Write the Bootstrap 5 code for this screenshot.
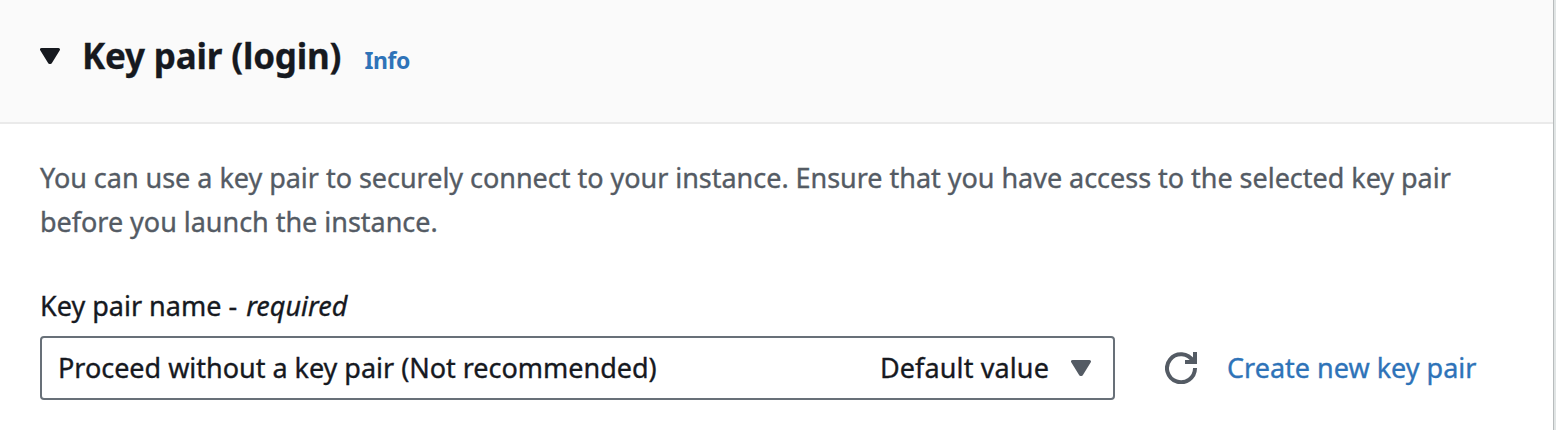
<!DOCTYPE html>
<html lang="en"><head><meta charset="utf-8"><title>Key pair</title>
<link rel="stylesheet" href="https://cdn.jsdelivr.net/npm/bootstrap@5.3.0/dist/css/bootstrap.min.css">
<style>
body{font-family:"Noto Sans","Open Sans",sans-serif;color:#16191f;height:430px;overflow:hidden;background:#e1e5e5}
.panel{width:1554px;height:430px;background:#fff;border-right:1px solid #b8bcbd}
.panel-head{height:124px;background:#fafafa;border-bottom:2px solid #eaeaea;padding:35px 0 0 40px}
.t{display:inline-block;white-space:nowrap}
.title{font-size:35px;line-height:42px;font-weight:700;width:260px;margin:0 22px;letter-spacing:-.18px;-webkit-text-stroke:.3px}
.info{font-size:23px;font-weight:700;color:#2e73b8;letter-spacing:-.4px;padding-left:.5px}
.desc{font-size:27px;line-height:44px;color:#545b64;padding:32px 0 0 40px;letter-spacing:-.03px;-webkit-text-stroke:.35px}
.lab{font-size:27px;line-height:36px;margin:44px 0 12px 40px;-webkit-text-stroke:.35px}
.lab i{margin-left:2px}
.pick{padding-left:40px;font-size:27px;-webkit-text-stroke:.35px}
.sel{width:1075px;height:64px;border:2px solid #687078;border-radius:4px;padding:0 22px 0 16px}
.sel .t{letter-spacing:-.02px}
.sel .dv{letter-spacing:.12px;margin-right:22px}
.refresh{margin:0 30px 0 50px}
.link{color:#2e73b8}
</style></head><body>
<main class="panel">
<header class="panel-head d-flex align-items-baseline"><svg width="20" height="21" viewBox="0 0 20 21"><path d="M1.500 1.500H18.500L10.500 14.500H9.500Z" fill="#16191f" stroke="#16191f" stroke-width="3" stroke-linejoin="round"/></svg>
<h2 class="title mb-0"><span class="t">Key pair (login)</span></h2><a class="info text-decoration-none"><span class="t">Info</span></a></header>
<div class="desc"><span class="t">You can use a key pair to securely connect to your instance. Ensure that you have access to the selected key pair</span><br><span class="t">before you launch the instance.</span></div>
<div class="lab"><span class="t">Key pair name</span> <span class="t">- <i>required</i></span></div>
<div class="pick d-flex align-items-center"><div class="sel d-flex align-items-center"><span class="t">Proceed without a key pair (Not recommended)</span><span class="t dv ms-auto">Default value</span><svg width="20" height="16" viewBox="0 0 20 16"><path d="M1.500 1.500H18.500L10.500 14.500H9.500Z" fill="#545b64" stroke="#545b64" stroke-width="3" stroke-linejoin="round"/></svg></div>
<svg class="refresh" width="32" height="32" viewBox="0 0 32 32" fill="none" stroke="#545b64" stroke-width="4"><path d="M30 16A14 14 0 1 1 28 9"/><path d="M30 0V10H20"/></svg>
<a class="link text-decoration-none"><span class="t">Create new key pair</span></a></div>
</main>
<script src="https://cdn.jsdelivr.net/npm/bootstrap@5.3.0/dist/js/bootstrap.bundle.min.js"></script>
</body></html>
